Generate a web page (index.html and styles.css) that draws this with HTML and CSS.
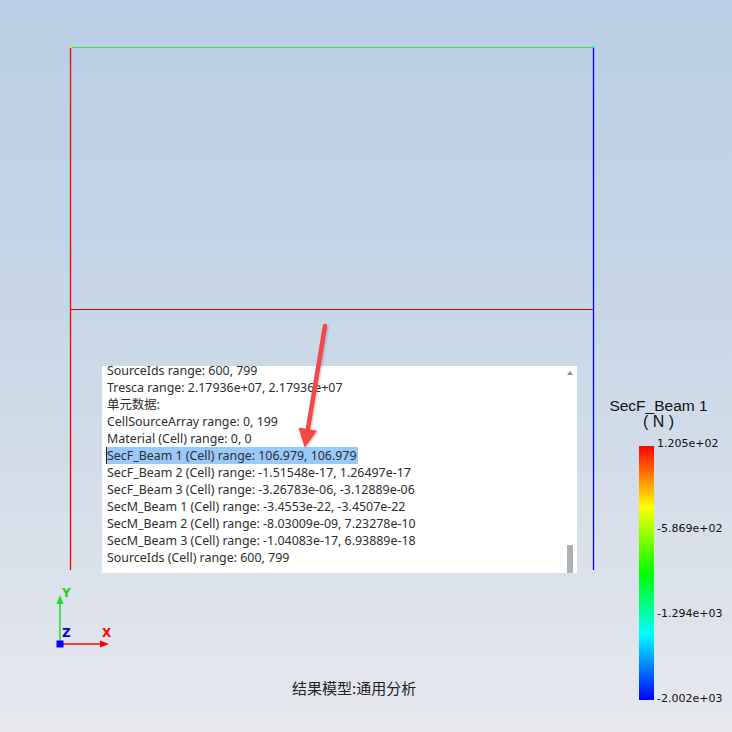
FILE: index.html
```html
<!DOCTYPE html>
<html>
<head>
<meta charset="utf-8">
<link rel="stylesheet" href="styles.css">
</head>
<body>
<div class="viewport">
  <div class="log">
    <div class="log-lines">
      <div class="ln">SourceIds range: 600, 799</div>
      <div class="ln">Tresca range: 2.17936e+07, 2.17936e+07</div>
      <div class="ln">单元数据:</div>
      <div class="ln">CellSourceArray range: 0, 199</div>
      <div class="ln">Material (Cell) range: 0, 0</div>
      <div class="ln"><span class="sel">SecF_Beam 1 (Cell) range: 106.979, 106.979</span></div>
      <div class="ln">SecF_Beam 2 (Cell) range: -1.51548e-17, 1.26497e-17</div>
      <div class="ln">SecF_Beam 3 (Cell) range: -3.26783e-06, -3.12889e-06</div>
      <div class="ln">SecM_Beam 1 (Cell) range: -3.4553e-22, -3.4507e-22</div>
      <div class="ln">SecM_Beam 2 (Cell) range: -8.03009e-09, 7.23278e-10</div>
      <div class="ln">SecM_Beam 3 (Cell) range: -1.04083e-17, 6.93889e-18</div>
      <div class="ln">SourceIds (Cell) range: 600, 799</div>
    </div>
    <div class="scroll-up"></div>
    <div class="scroll-thumb"></div>
  </div>

  <svg class="scene" width="732" height="732" viewBox="0 0 732 732">
    <defs>
      <filter id="sh" x="-50%" y="-10%" width="200%" height="120%">
        <feDropShadow dx="1" dy="1" stdDeviation="1" flood-color="#000" flood-opacity="0.25"/>
      </filter>
    </defs>
    <!-- frame -->
    <line x1="70.5" y1="47" x2="70.5" y2="570" stroke="#ff0000" stroke-width="1.3"/>
    <line x1="593.5" y1="47" x2="593.5" y2="570" stroke="#0000ff" stroke-width="1.3"/>
    <line x1="70" y1="47.5" x2="594" y2="47.5" stroke="#44dd33" stroke-width="1.2"/>
    <rect x="69.5" y="46.5" width="2" height="1.5" fill="#ffee00"/>
    <rect x="592.5" y="46.5" width="2" height="1.5" fill="#00e0ff"/>
    <line x1="70" y1="309.5" x2="594" y2="309.5" stroke="#e00000" stroke-width="1.2"/>

    <!-- pointer arrow -->
    <g filter="url(#sh)">
      <line x1="325" y1="326" x2="307.6" y2="431" stroke="#f44646" stroke-width="4.5" stroke-linecap="round"/>
      <polygon points="305,446 299.5,428.5 315.7,431.2" fill="#f44646" stroke="#f44646" stroke-width="1.5" stroke-linejoin="round"/>
    </g>

    <!-- axes triad -->
    <line x1="60" y1="644" x2="60" y2="603" stroke="#22dd22" stroke-width="1.5"/>
    <polygon points="60,595 56.5,604 63.5,604" fill="#22dd22"/>
    <line x1="60" y1="644" x2="101" y2="644" stroke="#ff0000" stroke-width="1.5"/>
    <polygon points="109,644 100,640.5 100,647.5" fill="#ff0000"/>
    <rect x="56.5" y="640.5" width="7" height="7" fill="#0000ff"/>
  </svg>

  <div class="axis-label ax-y">Y</div>
  <div class="axis-label ax-z">Z</div>
  <div class="axis-label ax-x">X</div>

  <div class="legend">
    <div class="legend-title">SecF_Beam 1</div>
    <div class="legend-unit">( N )</div>
    <div class="legend-body">
      <div class="colorbar"></div>
      <div class="ticks">
        <span class="tick">1.205e+02</span>
        <span class="tick">-5.869e+02</span>
        <span class="tick">-1.294e+03</span>
        <span class="tick">-2.002e+03</span>
      </div>
    </div>
  </div>

  <div class="caption">结果模型:通用分析</div>
</div>
</body>
</html>
```

FILE: styles.css
```css
html, body {
  margin: 0;
  padding: 0;
}

body {
  width: 732px;
  height: 732px;
  overflow: hidden;
}

.viewport {
  position: relative;
  width: 732px;
  height: 732px;
  background: linear-gradient(180deg, #bacfe5 0%, #c6d6e7 40%, #d9e0ea 75%, #e6e8ed 100%);
  font-family: "Noto Sans", "Noto Sans CJK SC", sans-serif;
}

.scene {
  position: absolute;
  left: 0;
  top: 0;
  pointer-events: none;
}

/* info panel overlay */
.log {
  position: absolute;
  left: 102px;
  top: 366px;
  width: 475px;
  height: 207px;
  background: #ffffff;
  overflow: hidden;
}

.log-lines {
  margin-top: -3.6px;
  padding-left: 5px;
  font-family: "Noto Sans", "Noto Sans CJK SC", sans-serif;
  font-size: 12.4px;
  line-height: 17px;
  color: #2e2e2e;
  white-space: nowrap;
}

.ln {
  height: 17px;
}

.sel {
  display: inline-block;
  height: 17px;
  margin-left: -1px;
  padding-right: 1px;
  background: #99c8fa;
  border-left: 1px solid #222;
  box-sizing: border-box;
}

.scroll-up {
  position: absolute;
  right: 4px;
  top: 5px;
  width: 0;
  height: 0;
  border-left: 3.5px solid transparent;
  border-right: 3.5px solid transparent;
  border-bottom: 4px solid #8a8d90;
}

.scroll-thumb {
  position: absolute;
  right: 4px;
  top: 179px;
  width: 6px;
  height: 28px;
  background: #aeb1b4;
}

/* axis triad labels */
.axis-label {
  position: absolute;
  font-family: "DejaVu Sans", sans-serif;
  font-weight: bold;
  font-size: 12px;
  line-height: 12px;
}

.ax-y { left: 62px; top: 587px; color: #22cc22; }
.ax-z { left: 62px; top: 627px; color: #0000ee; }
.ax-x { left: 102px; top: 627px; color: #ff0000; }

/* legend */
.legend {
  position: absolute;
  left: 598px;
  top: 398px;
  width: 121px;
}

.legend-title,
.legend-unit {
  font-family: "Liberation Sans", sans-serif;
  font-size: 15.5px;
  line-height: 16px;
  color: #111;
  text-align: center;
}

.legend-unit {
  font-size: 16px;
}

.legend-body {
  display: flex;
  margin-top: 16px;
  margin-left: 41px;
}

.colorbar {
  width: 15px;
  height: 254px;
  background: linear-gradient(180deg, #ff0000 0%, #ff8000 12%, #ffff00 24%, #00ff00 50%, #00ffff 74%, #0080ff 87%, #0000ff 100%);
}

.ticks {
  position: relative;
  flex: 1;
  font-family: "DejaVu Sans", sans-serif;
  font-size: 11px;
  line-height: 12px;
  color: #111;
}

.tick {
  position: absolute;
  left: 3px;
  white-space: nowrap;
}

.tick:nth-child(1) { top: -8px; left: 3px; }
.tick:nth-child(2) { top: 77px; }
.tick:nth-child(3) { top: 162px; }
.tick:nth-child(4) { top: 247px; }

.caption {
  position: absolute;
  left: 292px;
  top: 678px;
  font-family: "Noto Sans CJK SC", sans-serif;
  font-size: 15px;
  line-height: 20px;
  color: #222;
}
```
